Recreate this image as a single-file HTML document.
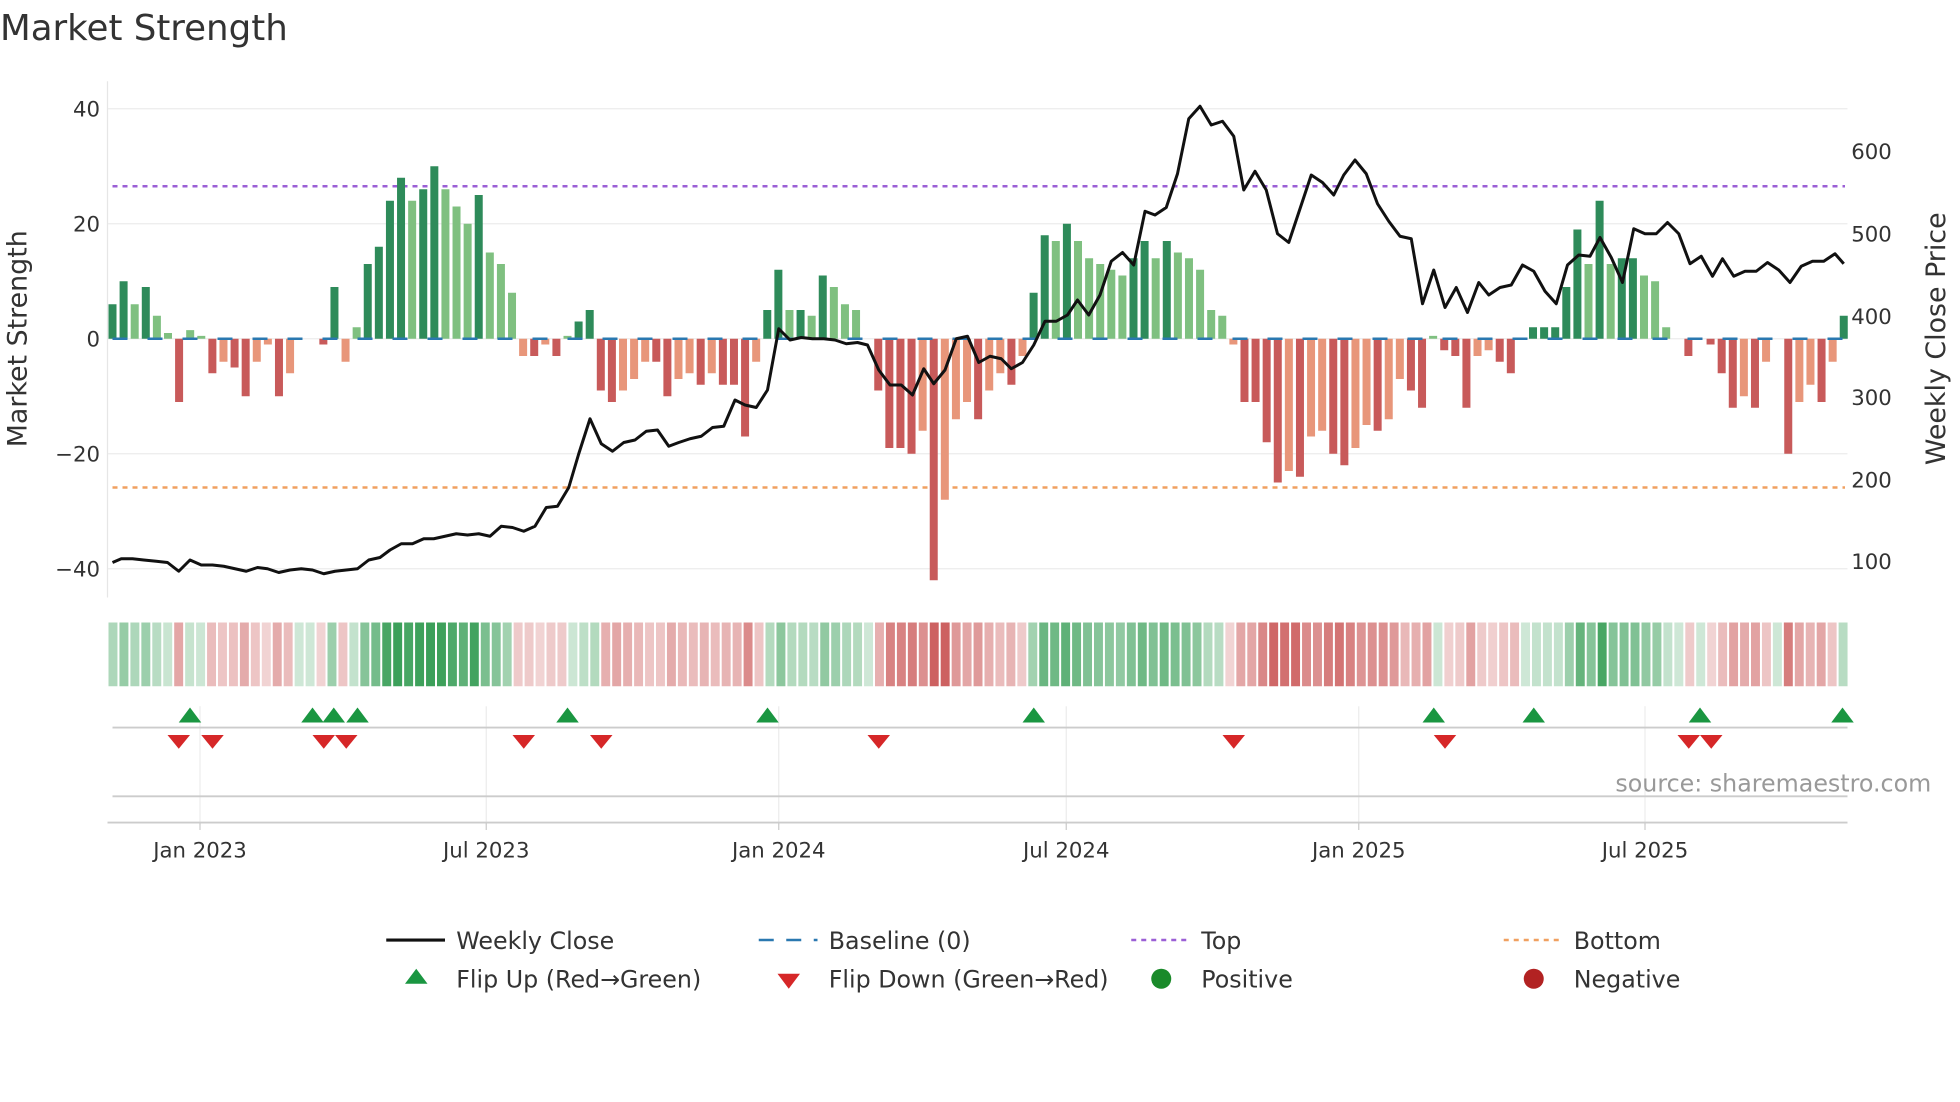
<!DOCTYPE html>
<html><head><meta charset="utf-8"><style>
html,body{margin:0;padding:0;background:#fff;width:1960px;height:1102px;overflow:hidden}
svg{display:block;font-family:"DejaVu Sans","Liberation Sans",sans-serif}
</style></head><body>
<svg id="s" width="1960" height="1102" viewBox="0 0 1568 881.6" xmlns="http://www.w3.org/2000/svg">
<text x="0" y="32" font-size="28.5" fill="#333">Market Strength</text>
<g stroke="#ececec" stroke-width="1">
<line x1="86" y1="87" x2="1478" y2="87"/><line x1="86" y1="179" x2="1478" y2="179"/>
<line x1="86" y1="271" x2="1478" y2="271"/><line x1="86" y1="363" x2="1478" y2="363"/><line x1="86" y1="455" x2="1478" y2="455"/>
</g>
<line x1="86" y1="65" x2="86" y2="478" stroke="#e6e6e6"/>
<g font-size="17" fill="#333" text-anchor="end">
<text x="80" y="93">40</text><text x="80" y="185">20</text><text x="80" y="277">0</text><text x="80" y="369">−20</text><text x="80" y="461">−40</text>
</g>
<g font-size="17" fill="#333">
<text x="1481" y="127">600</text><text x="1481" y="193">500</text><text x="1481" y="259">400</text><text x="1481" y="324">300</text><text x="1481" y="390">200</text><text x="1481" y="455">100</text>
</g>
<text transform="translate(21,271) rotate(-90)" font-size="21.5" fill="#333" text-anchor="middle">Market Strength</text>
<text transform="translate(1556,271) rotate(-90)" font-size="21.5" fill="#333" text-anchor="middle">Weekly Close Price</text>
<line x1="90" y1="149" x2="1476" y2="149" stroke="#9b5fd6" stroke-width="2" stroke-dasharray="4,4"/>
<line x1="90" y1="390" x2="1476" y2="390" stroke="#f0a060" stroke-width="2" stroke-dasharray="4,4"/>
<g id="bars"></g>
<line x1="90" y1="271" x2="1476" y2="271" stroke="#2a78b0" stroke-width="2" stroke-dasharray="12,16"/>
<polyline id="price" fill="none" stroke="#111" stroke-width="2.4" stroke-linejoin="round"/>
<g id="strip"></g>
<g stroke="#ececec"><line x1="160" y1="565" x2="160" y2="660"/><line x1="389" y1="565" x2="389" y2="660"/><line x1="623" y1="565" x2="623" y2="660"/><line x1="853" y1="565" x2="853" y2="660"/><line x1="1087" y1="565" x2="1087" y2="660"/><line x1="1316" y1="565" x2="1316" y2="660"/></g>
<line x1="90" y1="582" x2="1478" y2="582" stroke="#ccc" stroke-width="1.5"/>
<line x1="90" y1="637" x2="1478" y2="637" stroke="#ccc" stroke-width="1.5"/>
<line x1="86" y1="658" x2="1478" y2="658" stroke="#ccc" stroke-width="1.5"/>
<g id="marks"></g>
<text x="1545" y="633" font-size="19" fill="#999" text-anchor="end">source: sharemaestro.com</text>
<g stroke="#ccc"><line x1="160" y1="658" x2="160" y2="664"/><line x1="389" y1="658" x2="389" y2="664"/><line x1="623" y1="658" x2="623" y2="664"/><line x1="853" y1="658" x2="853" y2="664"/><line x1="1087" y1="658" x2="1087" y2="664"/><line x1="1316" y1="658" x2="1316" y2="664"/></g>
<g font-size="17" fill="#333" text-anchor="middle">
<text x="160" y="686">Jan 2023</text><text x="389" y="686">Jul 2023</text><text x="623" y="686">Jan 2024</text><text x="853" y="686">Jul 2024</text><text x="1087" y="686">Jan 2025</text><text x="1316" y="686">Jul 2025</text>
</g>
<g font-size="19" fill="#333">
<line x1="309" y1="752" x2="356" y2="752" stroke="#111" stroke-width="2.5"/><text x="365" y="759">Weekly Close</text>
<line x1="607" y1="752" x2="654" y2="752" stroke="#2a78b0" stroke-width="2" stroke-dasharray="12,10"/><text x="663" y="759">Baseline (0)</text>
<line x1="905" y1="752" x2="952" y2="752" stroke="#9b5fd6" stroke-width="2" stroke-dasharray="4,4"/><text x="961" y="759">Top</text>
<line x1="1203" y1="752" x2="1250" y2="752" stroke="#f0a060" stroke-width="2" stroke-dasharray="4,4"/><text x="1259" y="759">Bottom</text>
<polygon points="324,787 342,787 333,775" fill="#1a9641"/><text x="365" y="790">Flip Up (Red→Green)</text>
<polygon points="622,779 640,779 631,791" fill="#d62728"/><text x="663" y="790">Flip Down (Green→Red)</text>
<circle cx="929" cy="783" r="8" fill="#1a8a2a"/><text x="961" y="790">Positive</text>
<circle cx="1227" cy="783" r="8" fill="#b22222"/><text x="1259" y="790">Negative</text>
</g>
</svg>
<script>
var v=[6,10,6,9,4,1,-11,1.5,0.5,-6,-4,-5,-10,-4,-1,-10,-6,0,0,-1,9,-4,2,13,16,24,28,24,26,30,26,23,20,25,15,13,8,-3,-3,-1,-3,0.5,3,5,-9,-11,-9,-7,-4,-4,-10,-7,-6,-8,-6,-8,-8,-17,-4,5,12,5,5,4,11,9,6,5,0,-9,-19,-19,-20,-16,-42,-28,-14,-11,-14,-9,-6,-8,-3,8,18,17,20,17,14,13,12,11,14,17,14,17,15,14,12,5,4,-1,-11,-11,-18,-25,-23,-24,-17,-16,-20,-22,-19,-15,-16,-14,-7,-9,-12,0.5,-2,-3,-12,-3,-2,-4,-6,0,2,2,2,9,19,13,24,13,14,14,11,10,2,0,-3,0,-1,-6,-12,-10,-12,-4,0,-20,-11,-8,-11,-4,4];
var n=v.length,x0=90,x1=1475,dx=(x1-x0)/(n-1);
var h="";
for(var i=0;i<n;i++){var x=x0+i*dx,val=v[i],p=i?v[i-1]:0,dark=Math.abs(val)>=Math.abs(p);
var c=val>=0?(dark?"#2e8b5a":"#7fc080"):(dark?"#c85a5a":"#e8967a");
var y=val>=0?271-val*4.6:271,hh=Math.abs(val)*4.6;
h+='<rect x="'+(x-3.2)+'" y="'+y+'" width="6.4" height="'+hh+'" fill="'+c+'"/>';}
document.getElementById("bars").innerHTML=h;
var pts="90,450 97,447 106,447 115,448 125,449 134,450 143,457 152,448 161,452 170,452 179,453 188,455 197,457 206,454 214,455 223,458 232,456 241,455 250,456 259,459 268,457 277,456 286,455 295,448 304,446 312,440 321,435 330,435 339,431 347,431 356,429 365,427 374,428 383,427 392,429 401,421 410,422 419,425 428,421 437,406 446,405 455,390 463,363 472,335 481,355 490,361 499,354 508,352 517,345 526,344 535,357 543,354 552,351 561,349 570,342 579,341 588,320 596,324 605,326 614,312 623,263 632,272 641,270 650,271 659,271 668,272 677,275 686,274 694,276 703,296 712,308 721,308 730,316 739,295 747,307 756,296 765,271 774,269 783,290 792,285 801,287 809,295 818,290 827,276 836,257 845,257 854,252 862,240 871,252 880,236 889,209 898,202 907,212 916,169 924,172 933,166 942,139 951,95 960,85 969,100 978,97 987,109 995,152 1004,137 1013,152 1022,187 1031,194 1040,167 1049,140 1058,146 1067,156 1075,140 1084,128 1093,139 1102,163 1111,177 1120,189 1129,191 1138,243 1147,216 1156,246 1165,230 1174,250 1183,226 1191,236 1200,230 1209,228 1218,212 1227,217 1236,233 1245,243 1254,212 1263,204 1272,205 1280,190 1289,206 1298,226 1307,183 1316,187 1325,187 1334,178 1343,187 1352,211 1361,205 1370,221 1378,207 1387,221 1396,217 1405,217 1414,210 1423,216 1432,226 1441,213 1450,209 1459,209 1468,203 1475,211";
document.getElementById("price").setAttribute("points",pts);
var s="",cw=8.76,cnt=Math.round((1478-86)/cw);
for(var k=0;k<cnt;k++){var cx=86+k*cw,idx=Math.min(n-1,Math.max(0,Math.round((cx+cw/2-x0)/dx))),val=v[idx];
var a=Math.min(1,0.25+Math.abs(val)/35);var col=val>=0?"rgba(60,160,90,"+a+")":"rgba(200,80,80,"+(a*0.9)+")";
s+='<rect x="'+(cx+0.8)+'" y="498" width="'+(cw-1.6)+'" height="51" fill="'+col+'"/>';}
document.getElementById("strip").innerHTML=s;
var up=[152,250,267,286,454,614,827,1147,1227,1360,1474],dn=[143,170,259,277,419,481,703,987,1156,1351,1369],m="";
up.forEach(function(x){m+='<polygon points="'+(x-9)+',578 '+(x+9)+',578 '+x+',566" fill="#1a9641"/>';});
dn.forEach(function(x){m+='<polygon points="'+(x-9)+',588 '+(x+9)+',588 '+x+',599" fill="#d62728"/>';});
document.getElementById("marks").innerHTML=m;
</script>
</body></html>
